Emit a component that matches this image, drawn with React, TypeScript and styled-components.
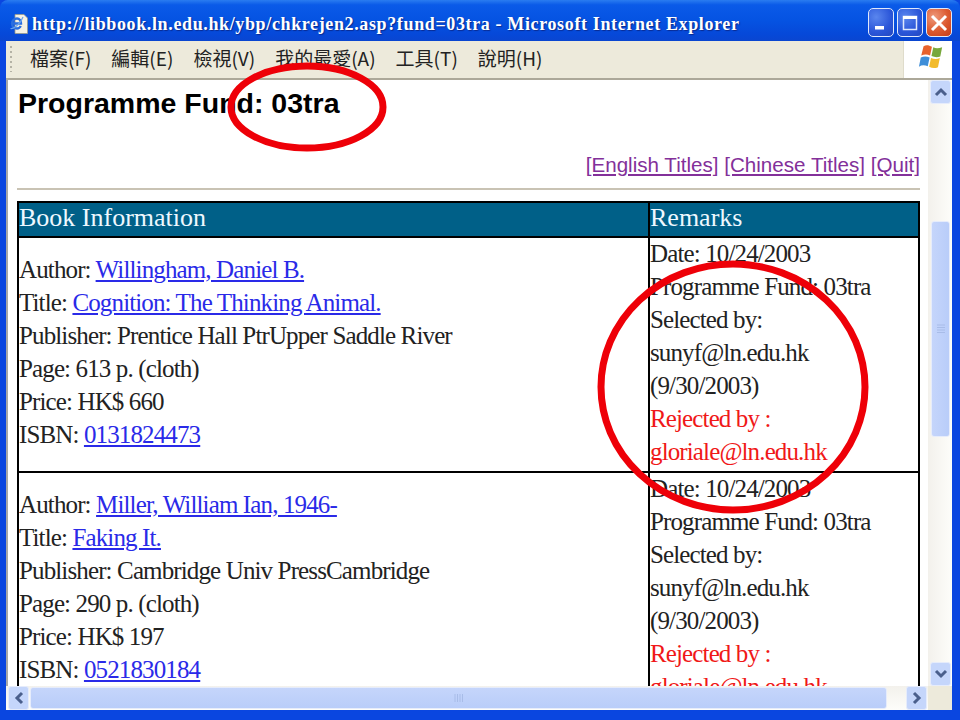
import styled, { createGlobalStyle } from "styled-components";

const GlobalStyle = createGlobalStyle`
  html, body {
    margin: 0;
    padding: 0;
    background: #0a3fd8;
  }
`;

const Window = styled.div`
  position: relative;
  width: 960px;
  height: 720px;
  overflow: hidden;
  display: flex;
  flex-direction: column;
  background: #0a46e0;
`;

const TitleBar = styled.div`
  height: 41px;
  flex: none;
  box-sizing: border-box;
  padding: 4px 8px 0 10px;
  display: flex;
  align-items: center;
  gap: 4px;
  border-radius: 8px 8px 0 0;
  background: linear-gradient(180deg, #2a7cf0 0%, #0a5ae8 12%, #0553e2 50%, #0648d8 85%, #0a46d0 100%);
`;

const TitleIcon = styled.div`
  margin-top: 3px;
  display: flex;
`;

const TitleText = styled.div`
  flex: 1;
  margin-top: 3px;
  font-family: "Liberation Serif", serif;
  font-weight: bold;
  font-size: 18px;
  letter-spacing: 0.63px;
  color: #fff;
  white-space: nowrap;
  text-shadow: 1px 1px 1px #0a2a90;
`;

const WinButtons = styled.div`
  display: flex;
  gap: 3px;
`;

const WinButton = styled.div<{ $close?: boolean }>`
  width: 26px;
  height: 29px;
  box-sizing: border-box;
  border: 1.5px solid #dfe8fb;
  border-radius: 5px;
  display: flex;
  align-items: center;
  justify-content: center;
  background: ${(p) =>
    p.$close
      ? "radial-gradient(circle at 30% 30%, #ee9a7c, #dc5a30 55%, #c53c18)"
      : "radial-gradient(circle at 30% 30%, #5a86ee, #2a55d8 60%, #2348c0)"};
`;

const MenuBar = styled.div`
  height: 37px;
  flex: none;
  margin: 0 8px 0 6px;
  display: flex;
  background: #fff;
`;

const MenuItems = styled.div`
  flex: 1;
  display: flex;
  align-items: center;
  gap: 20px;
  padding: 0 0 5px 24px;
  background: #edeadb;
  border-right: 1px solid #dfdccb;
  box-sizing: border-box;
  position: relative;
`;

const Grip = styled.div`
  position: absolute;
  left: 4px;
  top: 5px;
  width: 2px;
  height: 26px;
  background: repeating-linear-gradient(180deg, #b5b3a6 0 2px, transparent 2px 5px);
`;

const MenuItem = styled.span`
  font-family: "Noto Sans CJK TC", "Liberation Sans", sans-serif;
  font-size: 19px;
  color: #222;
`;

const LogoCell = styled.div`
  width: 48px;
  flex: none;
  box-sizing: border-box;
  padding: 0 0 6px 5px;
  display: flex;
  align-items: center;
  justify-content: center;
`;

const Body = styled.div`
  flex: 1;
  min-height: 0;
  display: flex;
  margin: 0 8px 0 6px;
  border-top: 2px solid #aca899;
  border-left: 2px solid #a8a8a8;
`;

const Page = styled.div`
  flex: 1;
  min-width: 0;
  overflow: hidden;
  background: #fff;
  box-sizing: border-box;
  padding: 0 8px 0 9px;
`;

const Heading = styled.h1`
  margin: 7px 0 0 1px;
  font-family: "Liberation Sans", sans-serif;
  font-weight: bold;
  font-size: 28.5px;
  line-height: 32px;
  color: #000;
`;

const TopLinks = styled.div`
  margin-top: 32px;
  text-align: right;
  font-family: "Liberation Sans", sans-serif;
  font-size: 20.6px;
  line-height: 28px;
`;

const PurpleLink = styled.a`
  color: #83309a;
  text-decoration: underline;
`;

const Rule = styled.hr`
  margin: 9px 0 11px;
  height: 2px;
  border: 0;
  background: #c9c3b4;
`;

const Table = styled.table`
  width: 100%;
  table-layout: fixed;
  border-collapse: collapse;
  border: 2px solid #000;
  font-family: "Liberation Serif", serif;
  font-size: 25px;
  line-height: 33px;
  color: #222;
`;

const HeadCell = styled.th`
  background: #006088;
  color: #eef8ff;
  font-size: 26px;
  line-height: 29px;
  font-weight: normal;
  text-align: left;
  padding: 0 0 4px;
  height: 29px;
  border: 2px solid #000;
  white-space: nowrap;
`;

const Cell = styled.td<{ $top?: boolean }>`
  padding: 0;
  border: 2px solid #000;
  vertical-align: ${(p) => (p.$top ? "top" : "middle")};
  white-space: nowrap;
`;

const BookStack = styled.div`
  margin-bottom: 5px;
`;

const RemarkStack = styled.div`
  margin: -1px 0 3px;
`;

const Line = styled.div<{ $red?: boolean }>`
  letter-spacing: -0.87px;
  color: ${(p) => (p.$red ? "#f01818" : "inherit")};
`;

const BlueLink = styled.a`
  color: #2a2ae8;
  text-decoration: underline;
`;

const VScroll = styled.div`
  width: 24px;
  flex: none;
  display: flex;
  flex-direction: column;
  background: linear-gradient(90deg, #f3f1ec, #fdfdfa);
`;

const VTrack = styled.div`
  flex: 1;
  padding: 117px 0 0;
  display: flex;
  flex-direction: column;
`;

const VThumb = styled.div`
  height: 214px;
  margin: 0 2px 0 3px;
  border-radius: 3px;
  border: 1px solid #e6ecfb;
  background: linear-gradient(90deg, #c5d5fb, #b9cdf9);
  display: flex;
  align-items: center;
  justify-content: center;
`;

const ScrollButton = styled.div`
  width: 21px;
  height: 24px;
  flex: none;
  margin: 0 1px 0 2px;
  box-sizing: border-box;
  border: 1px solid #e6ecfb;
  border-radius: 3px;
  background: #c5d6fb;
  display: flex;
  align-items: center;
  justify-content: center;
`;

const HScroll = styled.div`
  height: 24px;
  flex: none;
  margin: 0 8px 0 6px;
  display: flex;
  align-items: center;
  background: linear-gradient(180deg, #f3f1ec, #fdfdfa);
`;

const HThumb = styled.div`
  width: 857px;
  height: 22px;
  box-sizing: border-box;
  border: 1px solid #e6ecfb;
  border-radius: 3px;
  background: linear-gradient(180deg, #c5d5fb, #b9cdf9);
  display: flex;
  align-items: center;
  justify-content: center;
`;

const HGap = styled.div`
  flex: 1;
`;

const Corner = styled.div`
  width: 24px;
  height: 24px;
  flex: none;
  background: #edeadb;
`;

const BottomEdge = styled.div`
  height: 10px;
  flex: none;
`;

const Overlay = styled.svg`
  position: absolute;
  left: 0;
  top: 0;
  pointer-events: none;
`;

const Chevron = ({ d }: { d: string }) => (
  <svg width="14" height="14" viewBox="0 0 14 14">
    <path d={d} fill="none" stroke="#4a5f8c" strokeWidth="3" />
  </svg>
);

const IeIcon = () => (
  <svg width="18" height="20" viewBox="0 0 18 20">
    <path d="M5 .5h9l3.500 3.500v15.500H5z" fill="#f4f1e4" stroke="#9a9a8a" strokeWidth="0.8" />
    <path d="M2.500 9.500h8.500 C11 6.500 9.500 4.500 7 4.500 C4 4.500 2 7 2 9.500 C2 12.500 4.500 14.500 7 14.500 C8.800 14.500 10 13.500 10.800 12" fill="none" stroke="#2a6ee0" strokeWidth="2.400" />
    <path d="M.5 14.500 C4 15 11 9 13 3" fill="none" stroke="#6aa4ec" strokeWidth="1.200" />
  </svg>
);

const WindowsLogo = () => (
  <svg width="26" height="27" viewBox="0 0 28 28">
    <path d="M6 3 C9 1 12 2 15 3.500 L13 13 C10 11.500 7 11.500 3.500 13z" fill="#e8622c" />
    <path d="M16.500 4 C19 5.500 22 5.500 26 4 L24 14 C21 15 18 15 14.500 13.500z" fill="#78a83c" />
    <path d="M3 15 C6 13.500 9.500 13.500 12.500 15 L10.500 24.500 C7 23 4 23 1 25z" fill="#3f8ed8" />
    <path d="M14 15.500 C17.500 17 20.500 17 23.500 15.500 L21.500 25.500 C18 27 15 26.500 12 25z" fill="#f2bb2c" />
  </svg>
);

type Book = {
  author: string;
  title: string;
  publisher: string;
  page: string;
  price: string;
  isbn: string;
};

const books: Book[] = [
  {
    author: "Willingham, Daniel B.",
    title: "Cognition: The Thinking Animal.",
    publisher: "Prentice Hall PtrUpper Saddle River",
    page: "613 p. (cloth)",
    price: "HK$ 660",
    isbn: "0131824473",
  },
  {
    author: "Miller, William Ian, 1946-",
    title: "Faking It.",
    publisher: "Cambridge Univ PressCambridge",
    page: "290 p. (cloth)",
    price: "HK$ 197",
    isbn: "0521830184",
  },
];

const menus = ["檔案(F)", "編輯(E)", "檢視(V)", "我的最愛(A)", "工具(T)", "說明(H)"];

export default function App() {
  return (
    <Window>
      <GlobalStyle />
      <TitleBar>
        <TitleIcon>
          <IeIcon />
        </TitleIcon>
        <TitleText>http://libbook.ln.edu.hk/ybp/chkrejen2.asp?fund=03tra - Microsoft Internet Explorer</TitleText>
        <WinButtons>
          <WinButton>
            <svg width="16" height="16" viewBox="0 0 16 16">
              <rect x="2" y="11" width="9" height="3.5" fill="#fff" />
            </svg>
          </WinButton>
          <WinButton>
            <svg width="16" height="18" viewBox="0 0 16 18">
              <rect x="1.500" y="2.500" width="13" height="13" fill="none" stroke="#dfe8fb" strokeWidth="1.500" />
              <rect x="1" y="2" width="14" height="3" fill="#fff" />
            </svg>
          </WinButton>
          <WinButton $close>
            <svg width="18" height="18" viewBox="0 0 18 18">
              <path d="M2 2 L16 16 M16 2 L2 16" stroke="#fff" strokeWidth="3" />
            </svg>
          </WinButton>
        </WinButtons>
      </TitleBar>
      <MenuBar>
        <MenuItems>
          <Grip />
          {menus.map((m) => (
            <MenuItem key={m}>{m}</MenuItem>
          ))}
        </MenuItems>
        <LogoCell>
          <WindowsLogo />
        </LogoCell>
      </MenuBar>
      <Body>
        <Page>
          <Heading>Programme Fund: 03tra</Heading>
          <TopLinks>
            <PurpleLink href="#">[English Titles]</PurpleLink>{" "}
            <PurpleLink href="#">[Chinese Titles]</PurpleLink>{" "}
            <PurpleLink href="#">[Quit]</PurpleLink>
          </TopLinks>
          <Rule />
          <Table>
            <colgroup>
              <col style={{ width: 631 }} />
              <col />
            </colgroup>
            <thead>
              <tr>
                <HeadCell>Book Information</HeadCell>
                <HeadCell>Remarks</HeadCell>
              </tr>
            </thead>
            <tbody>
              {books.map((b) => (
                <tr key={b.isbn}>
                  <Cell>
                    <BookStack>
                      <Line>Author: <BlueLink href="#">{b.author}</BlueLink></Line>
                      <Line>Title: <BlueLink href="#">{b.title}</BlueLink></Line>
                      <Line>Publisher: {b.publisher}</Line>
                      <Line>Page: {b.page}</Line>
                      <Line>Price: {b.price}</Line>
                      <Line>ISBN: <BlueLink href="#">{b.isbn}</BlueLink></Line>
                    </BookStack>
                  </Cell>
                  <Cell $top>
                    <RemarkStack>
                      <Line>Date: 10/24/2003</Line>
                      <Line>Programme Fund: 03tra</Line>
                      <Line>Selected by:</Line>
                      <Line>sunyf@ln.edu.hk</Line>
                      <Line>(9/30/2003)</Line>
                      <Line $red>Rejected by :</Line>
                      <Line $red>gloriale@ln.edu.hk</Line>
                    </RemarkStack>
                  </Cell>
                </tr>
              ))}
            </tbody>
          </Table>
        </Page>
        <VScroll>
          <ScrollButton>
            <Chevron d="M2 10 L7 5 L12 10" />
          </ScrollButton>
          <VTrack>
            <VThumb>
              <svg width="10" height="10" viewBox="0 0 10 10">
                <path d="M1 1h8M1 3.500h8M1 6h8M1 8.500h8" stroke="#a8bce8" strokeWidth="1" />
              </svg>
            </VThumb>
          </VTrack>
          <ScrollButton>
            <Chevron d="M2 4 L7 9 L12 4" />
          </ScrollButton>
        </VScroll>
      </Body>
      <HScroll>
        <ScrollButton>
          <Chevron d="M10 2 L5 7 L10 12" />
        </ScrollButton>
        <HThumb>
          <svg width="10" height="10" viewBox="0 0 10 10">
            <path d="M1 1v8M3.500 1v8M6 1v8M8.500 1v8" stroke="#a8bce8" strokeWidth="1" />
          </svg>
        </HThumb>
        <HGap />
        <ScrollButton>
          <Chevron d="M4 2 L9 7 L4 12" />
        </ScrollButton>
        <Corner />
      </HScroll>
      <BottomEdge />
      <Overlay width="960" height="720" viewBox="0 0 960 720">
        <ellipse cx="307" cy="107" rx="76" ry="41" fill="none" stroke="#ee0008" strokeWidth="7" />
        <ellipse cx="733" cy="387" rx="132" ry="123" fill="none" stroke="#ee0008" strokeWidth="7" />
      </Overlay>
    </Window>
  );
}
